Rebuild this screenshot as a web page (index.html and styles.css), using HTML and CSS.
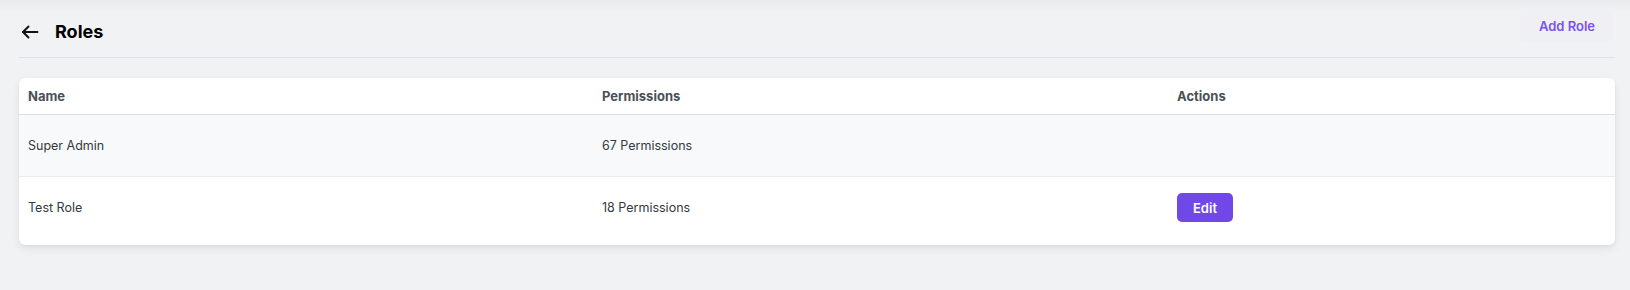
FILE: index.html
```html
<!DOCTYPE html>
<html lang="en">
<head>
    <meta charset="UTF-8">
    <meta name="viewport" content="width=device-width, initial-scale=1.0">
    <title>Roles</title>
    <link rel="stylesheet" href="styles.css">
</head>
<body>

<div class="page">
    <div class="page-header">
        <div class="title-group">
            <button class="back-button" aria-label="Back">
                <svg width="18" height="14" viewBox="0 0 18 14" fill="none" stroke="#111" stroke-width="1.9" stroke-linecap="round" stroke-linejoin="round">
                    <path d="M16.5 7H2"/>
                    <path d="M7.5 1.5L2 7l5.5 5.5"/>
                </svg>
            </button>
            <h1 class="title">Roles</h1>
        </div>
        <button class="add-button">Add Role</button>
    </div>

    <div class="card">
        <table class="roles-table">
            <thead>
                <tr>
                    <th class="col-name">Name</th>
                    <th class="col-perms">Permissions</th>
                    <th>Actions</th>
                </tr>
            </thead>
            <tbody>
                <tr class="striped">
                    <td>Super Admin</td>
                    <td>67 Permissions</td>
                    <td></td>
                </tr>
                <tr>
                    <td>Test Role</td>
                    <td>18 Permissions</td>
                    <td><button class="edit-button">Edit</button></td>
                </tr>
            </tbody>
        </table>
    </div>
</div>

</body>
</html>
```

FILE: styles.css
```css
body {
    margin: 0;
    font-family: Inter, "Noto Sans", Arial, sans-serif;
    background-color: #f1f2f4;
    background-image: linear-gradient(to bottom, rgba(0, 0, 0, 0.035), rgba(0, 0, 0, 0) 12px);
    min-height: 290px;
}
.page {
    padding: 0 15px 0 19px;
}
.page-header {
    display: flex;
    justify-content: space-between;
    align-items: flex-start;
    height: 57px;
    border-bottom: 1px solid #dee2e6;
}
.title-group {
    display: flex;
    align-items: center;
    margin-top: 19px;
}
.back-button {
    display: flex;
    align-items: center;
    justify-content: center;
    width: 22px;
    height: 26px;
    padding: 0;
    margin-right: 14px;
    border: none;
    background: none;
    cursor: pointer;
}
.title {
    margin: 0;
    font-size: 18px;
    font-weight: 700;
    line-height: 26px;
    color: #000;
}
.add-button {
    margin-top: 10px;
    margin-right: 2px;
    height: 32px;
    padding: 0 18px 0 19px;
    border: none;
    border-radius: 5px;
    background: #f0f0f4;
    color: #7950f2;
    font-family: inherit;
    font-size: 13px;
    font-weight: 600;
    cursor: pointer;
}
.card {
    margin-top: 20px;
    padding-bottom: 7px;
    background-color: #fff;
    border-radius: 6px;
    box-shadow: 0 4px 10px rgba(0, 0, 0, 0.07), 0 1px 3px rgba(0, 0, 0, 0.05);
    overflow: hidden;
}
.roles-table {
    width: 100%;
    border-collapse: collapse;
    table-layout: fixed;
}
.roles-table th {
    height: 36px;
    padding: 0 9px;
    text-align: left;
    font-size: 13px;
    font-weight: 700;
    color: #495057;
    border-bottom: 1px solid #dee2e6;
}
.col-name {
    width: 556px;
}
.col-perms {
    width: 557px;
}
.roles-table td {
    height: 61px;
    padding: 0 9px;
    font-size: 12.5px;
    color: #343a40;
}
.roles-table tbody tr + tr td {
    border-top: 1px solid #e9ecef;
}
.striped td {
    background-color: #f8f9fa;
}
.edit-button {
    display: block;
    height: 29px;
    padding: 0 16px;
    border: none;
    border-radius: 5px;
    background-color: #7048e8;
    color: #fff;
    font-family: inherit;
    font-size: 13px;
    font-weight: 600;
    cursor: pointer;
}
```
